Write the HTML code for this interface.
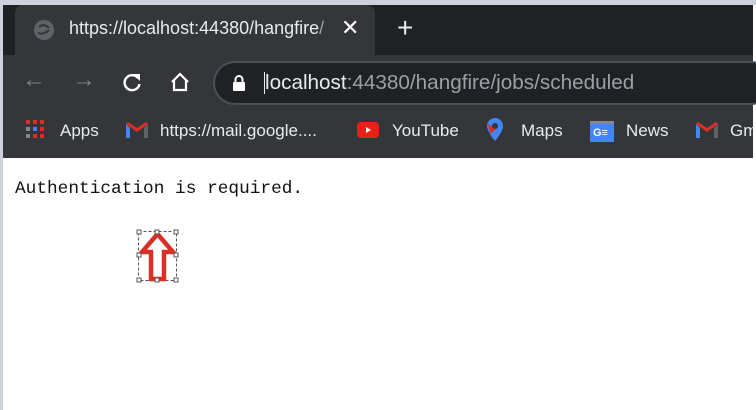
<!DOCTYPE html>
<html><head><style>
*{margin:0;padding:0;box-sizing:border-box}
body{width:756px;height:410px;overflow:hidden;background:#fff;position:relative;font-family:"Liberation Sans",sans-serif}
.a{position:absolute}
</style></head><body>
<div class="a" style="left:0;top:0;width:756px;height:5px;background:#cdd1dd"></div>
<div class="a" style="left:0;top:0;width:3px;height:410px;background:#cdd1dd"></div>
<div class="a" style="left:3px;top:5px;width:750px;height:153px;background:#202124"></div>
<div class="a" style="left:753px;top:5px;width:3px;height:153px;background:#fff"></div>
<!-- tab -->
<div class="a" style="left:15px;top:5px;width:360px;height:53px;background:#35363a;border-radius:8px 8px 0 0"></div>
<div class="a" style="left:3px;top:55px;width:750px;height:103px;background:#35363a"></div>
<svg class="a" style="left:33px;top:19px" width="22" height="22"><circle cx="11" cy="11" r="10" fill="#5f6368"/><path d="M6 8q5-4 10 1M5 14q6 2 11-3" stroke="#35363a" stroke-width="2" fill="none"/></svg>
<div class="a" style="left:69px;top:18px;color:#e8eaed;font-size:18px;white-space:nowrap;width:262px;overflow:hidden">https://localhost:44380/hangfire<span style="color:#9aa0a6">/</span></div>
<div class="a" style="left:341px;top:15px;color:#fff;font-size:22px">✕</div>
<div class="a" style="left:397px;top:12px;color:#e8eaed;font-size:28px;font-weight:300">+</div>
<!-- toolbar -->
<div class="a" style="left:22px;top:66px;color:#7f8287;font-size:24px">←</div>
<div class="a" style="left:72px;top:66px;color:#7f8287;font-size:24px">→</div>
<svg class="a" style="left:121px;top:71px" width="22" height="22"><path d="M17 7A7.5 7.5 0 1 0 18.5 13" stroke="#fff" stroke-width="2.4" fill="none"/><path d="M12 3h7v7z" fill="#fff"/></svg>
<svg class="a" style="left:168px;top:70px" width="24" height="24"><path d="M4 12L12 4L20 12M6 10v10h12V10" stroke="#fff" stroke-width="2.2" fill="none"/></svg>
<div class="a" style="left:213px;top:61px;width:560px;height:44px;border-radius:22px;background:#202124;border:2px solid #4a5058"></div>
<svg class="a" style="left:232px;top:74px" width="14" height="18"><path d="M3.5 8V5.5a3.5 3.5 0 0 1 7 0V8" stroke="#fff" stroke-width="2" fill="none"/><rect x="1" y="8" width="12" height="9" rx="1" fill="#fff"/></svg>
<div class="a" style="left:264px;top:72px;width:1px;height:22px;background:#e8eaed"></div>
<div class="a" style="left:265px;top:71px;color:#e8eaed;font-size:20.7px;white-space:nowrap">localhost<span style="color:#9aa0a6">:44380/hangfire/jobs/scheduled</span></div>
<!-- bookmarks -->
<svg class="a" style="left:26px;top:120px" width="20" height="20"><g fill="#d93025"><rect x="0" y="0" width="4" height="4"/><rect x="7" y="0" width="4" height="4"/><rect x="14" y="0" width="4" height="4"/><rect x="14" y="7" width="4" height="4"/><rect x="7" y="14" width="4" height="4"/><rect x="14" y="14" width="4" height="4"/></g><rect x="7" y="7" width="4" height="4" fill="#4285f4"/><rect x="0" y="7" width="4" height="4" fill="#80868b"/><rect x="0" y="14" width="4" height="4" fill="#80868b"/></svg>
<div class="a" style="left:60px;top:121px;color:#e8eaed;font-size:17px">Apps</div>
<svg class="a" style="left:126px;top:122px" width="22" height="16"><path d="M0 2v14h4V6z" fill="#4285f4"/><path d="M22 2v14h-4V6z" fill="#5f6368"/><path d="M0 2l11 8 11-8-2-2-9 6-9-6z" fill="#d93025"/></svg>
<div class="a" style="left:160px;top:121px;color:#e8eaed;font-size:17px">https://mail.google....</div>
<div class="a" style="left:357px;top:122px;width:22px;height:16px;background:#e62117;border-radius:4px"></div>
<div class="a" style="left:366px;top:127px;width:0;height:0;border-left:5px solid #fff;border-top:3px solid transparent;border-bottom:3px solid transparent"></div>
<div class="a" style="left:392px;top:121px;color:#e8eaed;font-size:17px">YouTube</div>
<svg class="a" style="left:486px;top:118px" width="18" height="24"><path d="M9 0a8 8 0 0 1 8 8c0 6-8 15-8 15S1 14 1 8a8 8 0 0 1 8-8z" fill="#4285f4"/><path d="M2 6l8 5-6 5z" fill="#d93025"/><circle cx="9" cy="8" r="3" fill="#35363a"/></svg>
<div class="a" style="left:521px;top:121px;color:#e8eaed;font-size:17px">Maps</div>
<div class="a" style="left:590px;top:121px;width:24px;height:21px;background:#4285f4;border-top:3px solid #888"></div>
<div class="a" style="left:593px;top:127px;color:#fff;font-size:11px;font-weight:bold">G≡</div>
<div class="a" style="left:626px;top:121px;color:#e8eaed;font-size:17px">News</div>
<svg class="a" style="left:696px;top:122px" width="22" height="16"><path d="M0 2v14h4V6z" fill="#4285f4"/><path d="M22 2v14h-4V6z" fill="#5f6368"/><path d="M0 2l11 8 11-8-2-2-9 6-9-6z" fill="#d93025"/></svg>
<div class="a" style="left:730px;top:121px;color:#e8eaed;font-size:17px;width:23px;overflow:hidden;white-space:nowrap">Gmail</div>
<!-- content -->
<div class="a" style="left:15px;top:179px;font-family:'Liberation Mono',monospace;font-size:17.8px;color:#111">Authentication is required.</div>
<svg class="a" style="left:135px;top:228px" width="46" height="56">
<rect x="3.5" y="3.5" width="38" height="49" fill="none" stroke="#555" stroke-dasharray="3,2"/>
<path d="M22.5 6L7 24h9v27h13V24h9z" fill="#fff" stroke="#d93025" stroke-width="4.5" stroke-linejoin="miter"/>
<g fill="#fff" stroke="#555"><rect x="2" y="2" width="4" height="4"/><rect x="20" y="2" width="4" height="4"/><rect x="39" y="2" width="4" height="4"/><rect x="2" y="25" width="4" height="4"/><rect x="39" y="25" width="4" height="4"/><rect x="2" y="50" width="4" height="4"/><rect x="20" y="50" width="4" height="4"/><rect x="39" y="50" width="4" height="4"/></g>
</svg>
</body></html>
